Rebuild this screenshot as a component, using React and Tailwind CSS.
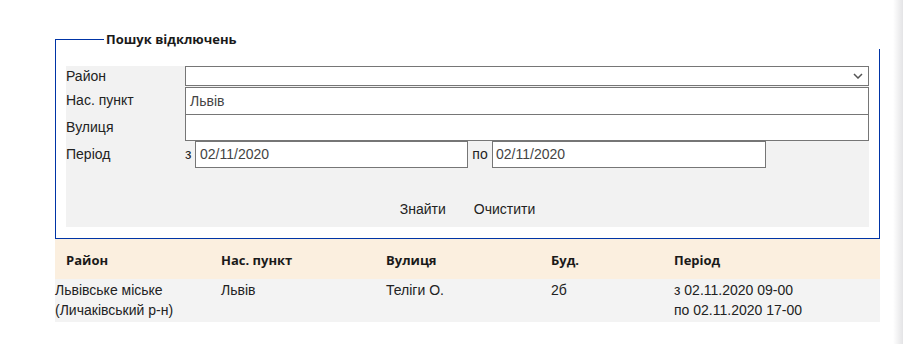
const labelCls = "h-full flex items-center";

const Chevron = () => (
  <svg width="10" height="6" viewBox="0 0 10 6" className="text-[#555]">
    <path d="M1 1l4 4 4-4" fill="none" stroke="currentColor" strokeWidth="1.5" />
  </svg>
);

const rows = [
  {
    district: ["Львівське міське", "(Личаківський р-н)"],
    city: "Львів",
    street: "Теліги О.",
    house: "2б",
    period: ["з 02.11.2020 09-00", "по 02.11.2020 17-00"],
  },
];

const SearchForm = () => (
  <div className="w-[825px]">
    <div className="flex h-[20px] items-stretch">
      <span className="mt-[10px] w-[49px] border-t border-l border-[#0034a6]" />
      <span className="pl-[2px] font-['Open_Sans',sans-serif] text-[13px] font-bold leading-[20px] text-[#1a1a1a]">
        Пошук відключень
      </span>
    </div>
    <div className="border-x border-b border-[#0034a6] pt-[17px] pl-[10px] pr-[10px] pb-[11px]">
      <div className="bg-[#f2f2f2] pb-[8px]">
        <div className="grid grid-cols-[119px_1fr] text-[14px] text-[#222]">
          <div className={`${labelCls} h-[21px]`}>Район</div>
          <div className="h-[21px] pb-px">
            <div className="flex h-[20px] items-center justify-end border border-[#767676] bg-white pr-[5px]">
              <Chevron />
            </div>
          </div>
          <div className={`${labelCls} h-[27px]`}>Нас. пункт</div>
          <div className="flex h-[27px] items-center border border-[#767676] border-b-0 bg-white pl-[4px] text-[#444]">
            Львів
          </div>
          <div className={`${labelCls} h-[27px]`}>Вулиця</div>
          <div className="h-[27px] border border-[#767676] bg-white" />
          <div className={`${labelCls} h-[27px]`}>Період</div>
          <div className="flex h-[27px] items-stretch">
            <span className="flex w-[10px] items-center">з</span>
            <div className="flex w-[273px] items-center border border-[#767676] bg-white pl-[4px] text-[#444]">
              02/11/2020
            </div>
            <span className="flex w-[24px] items-center justify-center">по</span>
            <div className="flex w-[274px] items-center border border-[#767676] bg-white pl-[3px] text-[#444]">
              02/11/2020
            </div>
          </div>
        </div>
        <div className="mt-[31px] flex justify-center gap-[28px] text-[14px] text-[#222]">
          <button type="button" className="leading-[20px]">Знайти</button>
          <button type="button" className="leading-[20px]">Очистити</button>
        </div>
      </div>
    </div>
  </div>
);

const ResultTable = () => (
  <div className="w-[825px]">
    <div className="grid h-[40px] grid-cols-[166px_165px_165px_123px_1fr] items-center bg-[#fbefdf] pt-[3px] font-['Open_Sans',sans-serif] text-[13px] font-bold text-[#1a1a1a]">
      <div className="pl-[11px]">Район</div>
      <div>Нас. пункт</div>
      <div>Вулиця</div>
      <div>Буд.</div>
      <div>Період</div>
    </div>
    {rows.map((r) => (
      <div
        key={r.street}
        className="grid grid-cols-[166px_165px_165px_123px_1fr] bg-[#f3f3f3] pt-px pb-[2px] text-[14px] leading-[20px] text-[#222]"
      >
        <div>
          {r.district.map((l) => (
            <div key={l}>{l}</div>
          ))}
        </div>
        <div>{r.city}</div>
        <div>{r.street}</div>
        <div>{r.house}</div>
        <div>
          {r.period.map((l) => (
            <div key={l}>{l}</div>
          ))}
        </div>
      </div>
    ))}
  </div>
);

export default function App() {
  return (
    <div className="flex h-[344px] w-[903px] bg-white font-['Liberation_Sans',Arial,sans-serif]">
      <main className="flex-1 pt-[29px] pl-[55px]">
        <SearchForm />
        <ResultTable />
      </main>
      <div className="w-[10px] bg-gradient-to-r from-white to-[#e4e4e6]" />
    </div>
  );
}
